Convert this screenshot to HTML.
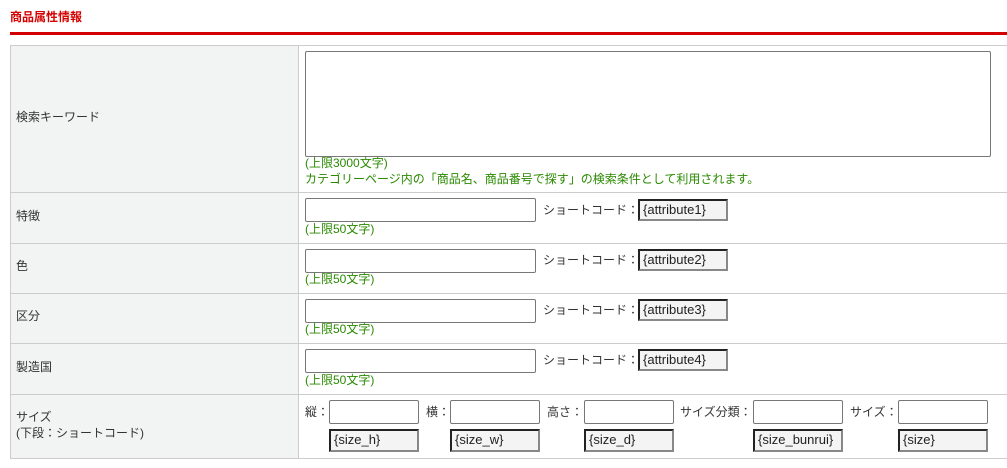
<!DOCTYPE html>
<html><head><meta charset="utf-8"><style>
*{margin:0;padding:0;box-sizing:border-box}
body{width:1007px;height:468px;background:#fff;font-family:"Liberation Sans","Noto Sans CJK JP",sans-serif;font-size:12px;color:#333;position:relative;overflow:hidden}
.a{position:absolute;white-space:nowrap;line-height:14px}
.t{left:10px;top:10px;color:#d40000;font-weight:bold;font-size:12px}
.red{left:10px;top:32px;width:997px;height:3px;background:#d40000}
.lab{left:10px;width:289px;background:#f2f3f3;border-top:1px solid #ccc;border-left:1px solid #ccc;border-right:1px solid #ccc}
.rowline{left:299px;width:708px;height:1px;background:#ccc}
.inp{border:1px solid #777;border-radius:2px;background:#fff}
.code{border:2px solid #888;border-top-color:#222;border-left-color:#222;background:#f4f4f4;padding:1px 0 0 3px;font-size:13px;color:#222;line-height:16px}
.g{color:#2a8a00}
</style></head><body>
<div class="a t">商品属性情報</div>
<div class="a red"></div>
<div class="a lab" style="top:45px;height:147px"></div>
<div class="a lab" style="top:192px;height:51px"></div>
<div class="a lab" style="top:243px;height:50px"></div>
<div class="a lab" style="top:293px;height:50px"></div>
<div class="a lab" style="top:343px;height:51px"></div>
<div class="a lab" style="top:394px;height:65px;border-bottom:1px solid #ccc"></div>
<div class="a rowline" style="top:45px"></div>
<div class="a rowline" style="top:192px"></div>
<div class="a rowline" style="top:243px"></div>
<div class="a rowline" style="top:293px"></div>
<div class="a rowline" style="top:343px"></div>
<div class="a rowline" style="top:394px"></div>
<div class="a rowline" style="top:458px"></div>
<div class="a" style="left:16px;top:110px">検索キーワード</div>
<div class="a" style="left:16px;top:209px">特徴</div>
<div class="a" style="left:16px;top:259px">色</div>
<div class="a" style="left:16px;top:309px">区分</div>
<div class="a" style="left:16px;top:360px">製造国</div>
<div class="a" style="left:16px;top:410px">サイズ</div>
<div class="a" style="left:16px;top:426px">(下段：ショートコード)</div>
<div class="a inp" style="left:305px;top:51px;width:686px;height:106px"></div>
<div class="a g" style="left:305px;top:156px">(上限3000文字)</div>
<div class="a g" style="left:305px;top:172px">カテゴリーページ内の「商品名、商品番号で探す」の検索条件として利用されます。</div>

<div class="a inp" style="left:305px;top:198px;width:231px;height:24px"></div>
<div class="a" style="left:543px;top:203px">ショートコード：</div>
<div class="a code" style="left:638px;top:199px;width:90px;height:22px">{attribute1}</div>
<div class="a g" style="left:305px;top:222px">(上限50文字)</div>

<div class="a inp" style="left:305px;top:249px;width:231px;height:24px"></div>
<div class="a" style="left:543px;top:253px">ショートコード：</div>
<div class="a code" style="left:638px;top:249px;width:90px;height:22px">{attribute2}</div>
<div class="a g" style="left:305px;top:272px">(上限50文字)</div>

<div class="a inp" style="left:305px;top:299px;width:231px;height:24px"></div>
<div class="a" style="left:543px;top:303px">ショートコード：</div>
<div class="a code" style="left:638px;top:299px;width:90px;height:22px">{attribute3}</div>
<div class="a g" style="left:305px;top:322px">(上限50文字)</div>

<div class="a inp" style="left:305px;top:349px;width:231px;height:24px"></div>
<div class="a" style="left:543px;top:353px">ショートコード：</div>
<div class="a code" style="left:638px;top:349px;width:90px;height:22px">{attribute4}</div>
<div class="a g" style="left:305px;top:373px">(上限50文字)</div>

<div class="a" style="left:305px;top:405px">縦：</div>
<div class="a inp" style="left:329px;top:400px;width:90px;height:24px"></div>
<div class="a" style="left:426px;top:405px">横：</div>
<div class="a inp" style="left:450px;top:400px;width:90px;height:24px"></div>
<div class="a" style="left:547px;top:405px">高さ：</div>
<div class="a inp" style="left:584px;top:400px;width:90px;height:24px"></div>
<div class="a" style="left:680px;top:405px">サイズ分類：</div>
<div class="a inp" style="left:753px;top:400px;width:90px;height:24px"></div>
<div class="a" style="left:850px;top:405px">サイズ：</div>
<div class="a inp" style="left:898px;top:400px;width:90px;height:24px"></div>

<div class="a code" style="left:329px;top:429px;width:90px;height:23px">{size_h}</div>
<div class="a code" style="left:450px;top:429px;width:90px;height:23px">{size_w}</div>
<div class="a code" style="left:584px;top:429px;width:90px;height:23px">{size_d}</div>
<div class="a code" style="left:753px;top:429px;width:90px;height:23px">{size_bunrui}</div>
<div class="a code" style="left:898px;top:429px;width:90px;height:23px">{size}</div>
</body></html>
